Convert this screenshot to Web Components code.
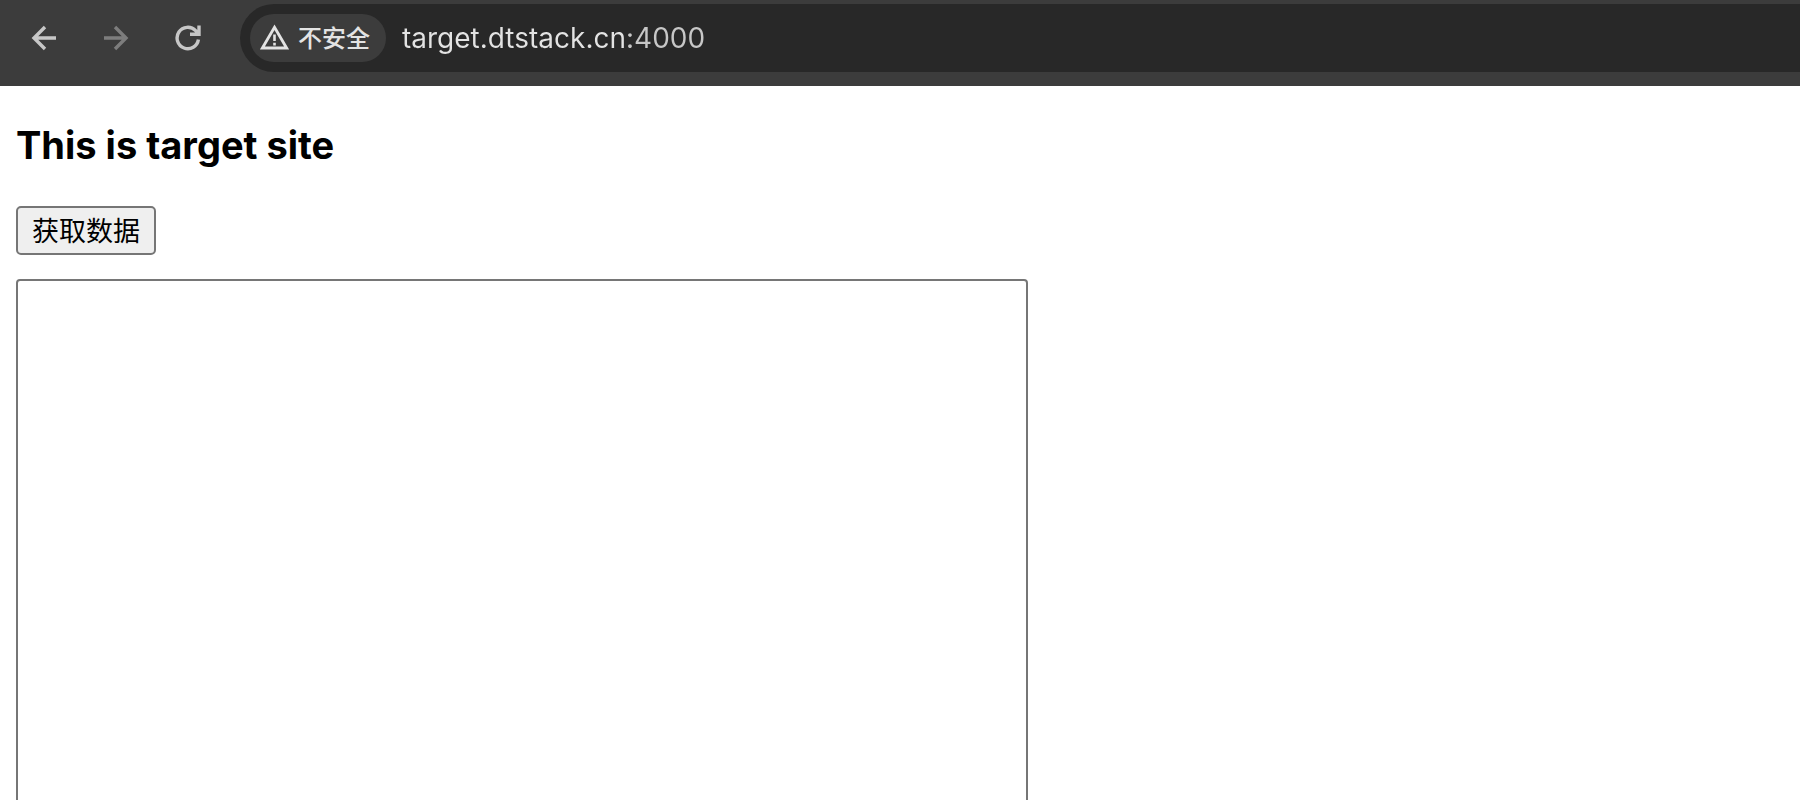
<!DOCTYPE html>
<html lang="zh-CN">
<head>
<meta charset="utf-8">
<meta name="viewport" content="width=device-width, initial-scale=1">
<title>Target site</title>
<style>
  body {
    height: 100vh;
    margin: 0;
    overflow: hidden;
    background: #fff;
    color: #000;
    font-family: Inter, "Noto Sans CJK SC", sans-serif;
  }
</style>
</head>
<body>
<browser-bar>
  <security-chip slot="status">不安全</security-chip>
</browser-bar>
<target-page>
  <span slot="title">This is target site</span>
  <span slot="action">获取数据</span>
</target-page>

<script>
class BrowserBar extends HTMLElement {
  constructor() {
    super();
    this.attachShadow({ mode: "open" });
  }

  connectedCallback() {
    this.shadowRoot.innerHTML = `
      <style>
        :host {
          display: flex;
          box-sizing: border-box;
          height: 86px;
          padding: 4px 0 14px 20px;
          background: #3c3c3c;
        }

        nav {
          display: flex;
          flex: none;
          align-items: center;
          gap: 24px;
          margin-right: 28px;
        }

        button {
          width: 48px;
          height: 48px;
          padding: 0;
          border: 0;
          background: none;
          color: #c7c7c7;
        }

        button:disabled { color: #7d7d7d; }

        svg {
          display: block;
          margin: auto;
          fill: none;
          stroke: currentColor;
          stroke-width: 3.4;
        }

        .address {
          display: flex;
          flex: 1;
          align-items: center;
          gap: 16px;
          min-width: 0;
          padding-left: 10px;
          border-radius: 34px 0 0 34px;
          background: #282828;
        }

        input {
          flex: 1;
          min-width: 0;
          height: 40px;
          padding: 0;
          border: 0;
          outline: 0;
          /* host is brighter than the port */
          background: linear-gradient(90deg, #e3e3e3 227px, #c7c7c7 227px) text;
          color: #e3e3e3;
          -webkit-text-fill-color: transparent;
          font: 28px Inter, sans-serif;
        }
      </style>

      <nav aria-label="Navigation">
        <button type="button" aria-label="Back">
          <svg width="26" height="26" viewBox="0 0 26 26"><path d="M25 13H3M14 2L3 13L14 24"/></svg>
        </button>
        <button type="button" aria-label="Forward" disabled>
          <svg width="26" height="26" viewBox="0 0 26 26"><path d="M1 13H23M12 2L23 13L12 24"/></svg>
        </button>
        <button type="button" aria-label="Reload">
          <svg width="26" height="26" viewBox="0 0 26 26"><path d="M23.4 14.5A10.7 10.7 0 1 1 20.6 5.7L23.6 9M24 .5V9.3H15"/></svg>
        </button>
      </nav>
      <div class="address">
        <slot name="status"></slot>
        <input type="text" value="target.dtstack.cn:4000" aria-label="Address" spellcheck="false">
      </div>
    `;
  }
}

class SecurityChip extends HTMLElement {
  constructor() {
    super();
    this.attachShadow({ mode: "open" });
  }

  connectedCallback() {
    this.shadowRoot.innerHTML = `
      <style>
        :host { display: block; flex: none; }

        button {
          display: flex;
          align-items: center;
          gap: 9px;
          height: 48px;
          padding: 0 16px 2px 10px;
          border: 0;
          border-radius: 24px;
          background: #3c3c3c;
          color: #e3e3e3;
          font: 500 24px/32px "Noto Sans CJK SC", sans-serif;
        }
      </style>

      <button type="button">
        <svg width="29" height="26" viewBox="0 0 29 26" fill="none" stroke="currentColor" aria-hidden="true">
          <path d="M14.5 3.2L26.6 24H2.4Z" stroke-width="2.8"/>
          <path d="M14.5 10.4V17M14.5 18.8V21.4" stroke-width="2.6"/>
        </svg>
        <slot></slot>
      </button>
    `;
  }
}

class TargetPage extends HTMLElement {
  constructor() {
    super();
    this.attachShadow({ mode: "open" });
  }

  connectedCallback() {
    this.shadowRoot.innerHTML = `
      <style>
        :host {
          display: flex;
          flex-direction: column;
          align-items: flex-start;
          gap: 24px;
          padding: 36px 16px 16px;
        }

        h1 {
          margin: 0 0 14px;
          font-size: 38px;
          line-height: 46px;
        }

        button {
          height: 49px;
          padding: 0 14px 2px;
          border: 2px solid #767676;
          border-radius: 5px;
          background: #efefef;
          color: #000;
          font: 27px/36px "Noto Sans CJK SC", sans-serif;
        }

        textarea {
          box-sizing: border-box;
          width: 1012px;
          max-width: 100%;
          padding: 4px;
          border: 2px solid #767676;
          border-radius: 4px;
          background: #fff;
          font: 26px/30px "Liberation Mono", monospace;
          resize: none;
        }
      </style>

      <h1><slot name="title"></slot></h1>
      <button type="button"><slot name="action"></slot></button>
      <textarea rows="20" aria-label="Response data"></textarea>
    `;
  }
}

customElements.define("browser-bar", BrowserBar);
customElements.define("security-chip", SecurityChip);
customElements.define("target-page", TargetPage);
</script>
</body>
</html>
